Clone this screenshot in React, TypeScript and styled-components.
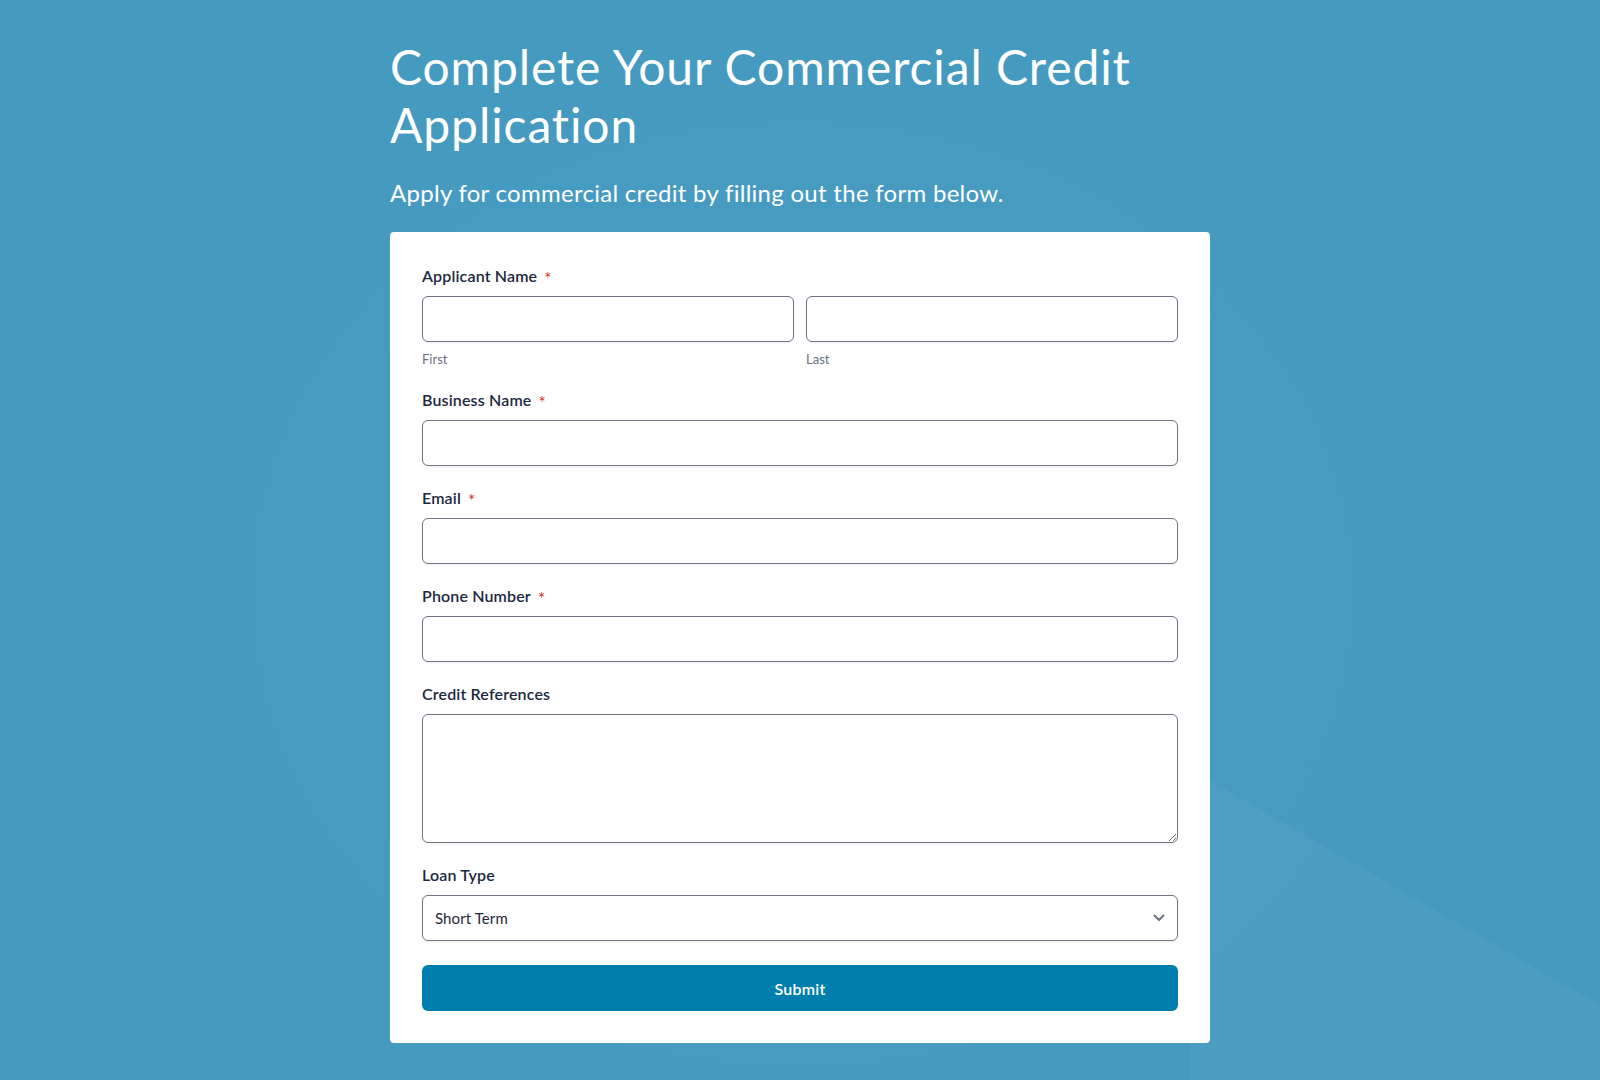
import React from 'react';
import styled, { createGlobalStyle } from 'styled-components';

const GlobalStyle = createGlobalStyle`
  html, body {
    margin: 0;
    padding: 0;
  }
  body {
    min-height: 1080px;
    font-family: Lato, "Open Sans", sans-serif;
    font-variant-ligatures: none;
    background-color: #4399bf;
    background-image:
      linear-gradient(210deg, rgba(255, 255, 255, 0) 0 42%, rgba(255, 255, 255, 0.03) 42% 100%),
      radial-gradient(ellipse 700px 600px at 50% 55%, rgba(255, 255, 255, 0.03), rgba(255, 255, 255, 0)),
      linear-gradient(rgba(255, 255, 255, 0.012), rgba(255, 255, 255, 0.012));
    background-repeat: no-repeat;
    background-size: 410px 300px, 1600px 1080px, 1600px 1080px;
    background-position: right bottom, 0 0, 0 0;
  }
`;

const Page = styled.div`
  width: 820px;
  margin: 0 auto;
  padding: 38px 0 36px;
`;

const Title = styled.h1`
  margin: 0;
  font-size: 48px;
  line-height: 1.2;
  font-weight: 400;
  letter-spacing: 0.9px;
  color: #ffffff;
`;

const Subtitle = styled.p`
  margin: 22px 0 21px;
  font-size: 24px;
  line-height: 36px;
  font-weight: 400;
  letter-spacing: 0.28px;
  color: #ffffff;
`;

const Card = styled.form`
  background: #ffffff;
  border-radius: 4px;
  padding: 32px;
  display: flex;
  flex-direction: column;
`;

const Field = styled.div`
  display: flex;
  flex-direction: column;
  margin-bottom: 20px;
`;

const Label = styled.label`
  display: flex;
  align-items: center;
  gap: 7px;
  font-size: 16px;
  line-height: 24px;
  font-weight: 600;
  letter-spacing: 0.15px;
  color: #1c2840;
  margin-bottom: 8px;
`;

const Required = styled.span`
  color: #d6311f;
  font-size: 17px;
  line-height: 24px;
  font-weight: 400;
  position: relative;
  top: 3px;
`;

const NameRow = styled.div`
  display: grid;
  grid-template-columns: 1fr 1fr;
  column-gap: 12px;
`;

const SubField = styled.div`
  display: flex;
  flex-direction: column;
`;

const SubLabel = styled.span`
  margin-top: 8px;
  font-size: 13px;
  line-height: 18px;
  color: #6b7080;
`;

const TextInput = styled.input`
  box-sizing: border-box;
  width: 100%;
  height: 46px;
  border: 1px solid #6e7587;
  border-radius: 6px;
  box-shadow: 0 1px 3px rgba(15, 23, 42, 0.08);
  padding: 0 12px;
  font: inherit;
  font-size: 14px;
  outline: none;
  background: #ffffff;
`;

const TextArea = styled.textarea`
  box-sizing: border-box;
  width: 100%;
  height: 129px;
  border: 1px solid #6e7587;
  border-radius: 6px;
  box-shadow: 0 1px 3px rgba(15, 23, 42, 0.08);
  padding: 10px 12px;
  font: inherit;
  font-size: 14px;
  outline: none;
  display: block;
`;

const SelectWrap = styled.div`
  position: relative;
`;

const Select = styled.select`
  box-sizing: border-box;
  width: 100%;
  height: 46px;
  border: 1px solid #6e7587;
  border-radius: 6px;
  box-shadow: 0 1px 3px rgba(15, 23, 42, 0.08);
  padding: 0 12px;
  appearance: none;
  -webkit-appearance: none;
  background: #ffffff;
  font-family: Lato, "Open Sans", sans-serif;
  font-size: 15px;
  letter-spacing: 0.1px;
  color: #1f2937;
  outline: none;
`;

const Chevron = styled.svg`
  position: absolute;
  right: 13px;
  top: 50%;
  transform: translateY(-50%);
  pointer-events: none;
`;

const SubmitButton = styled.button`
  margin-top: 4px;
  height: 46px;
  border: none;
  border-radius: 6px;
  background: #017fac;
  color: #ffffff;
  font-family: Lato, "Open Sans", sans-serif;
  font-size: 16px;
  font-weight: 600;
  letter-spacing: 0.2px;
  cursor: pointer;
`;

export default function App() {
  return (
    <>
      <GlobalStyle />
      <Page>
        <Title>Complete Your Commercial Credit Application</Title>
        <Subtitle>Apply for commercial credit by filling out the form below.</Subtitle>
        <Card onSubmit={(e) => e.preventDefault()}>
          <Field>
            <Label>
              Applicant Name <Required>*</Required>
            </Label>
            <NameRow>
              <SubField>
                <TextInput type="text" />
                <SubLabel>First</SubLabel>
              </SubField>
              <SubField>
                <TextInput type="text" />
                <SubLabel>Last</SubLabel>
              </SubField>
            </NameRow>
          </Field>
          <Field>
            <Label>
              Business Name <Required>*</Required>
            </Label>
            <TextInput type="text" />
          </Field>
          <Field>
            <Label>
              Email <Required>*</Required>
            </Label>
            <TextInput type="email" />
          </Field>
          <Field>
            <Label>
              Phone Number <Required>*</Required>
            </Label>
            <TextInput type="tel" />
          </Field>
          <Field>
            <Label>Credit References</Label>
            <TextArea />
          </Field>
          <Field>
            <Label>Loan Type</Label>
            <SelectWrap>
              <Select defaultValue="short">
                <option value="short">Short Term</option>
                <option value="long">Long Term</option>
              </Select>
              <Chevron width="12" height="8" viewBox="0 0 12 8" fill="none">
                <path d="M1.5 1.5L6 6l4.5-4.5" stroke="#6b7280" strokeWidth="2" strokeLinecap="round" strokeLinejoin="round" />
              </Chevron>
            </SelectWrap>
          </Field>
          <SubmitButton type="submit">Submit</SubmitButton>
        </Card>
      </Page>
    </>
  );
}
